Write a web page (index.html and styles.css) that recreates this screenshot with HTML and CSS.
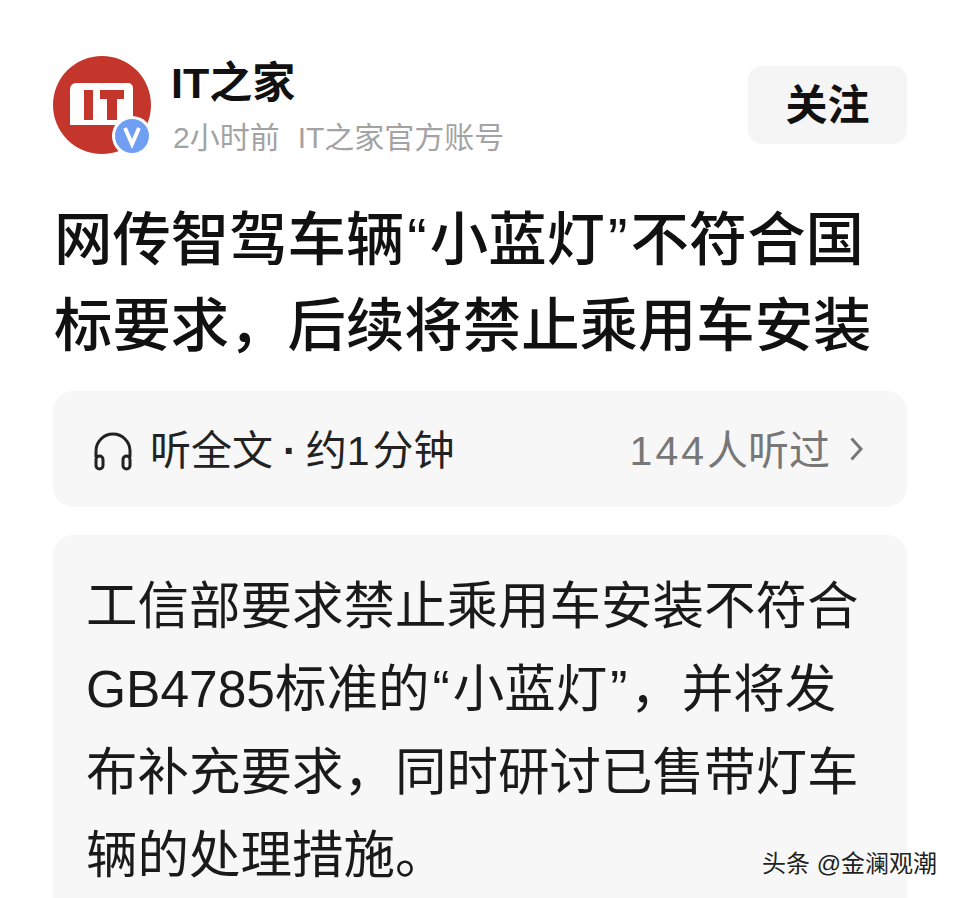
FILE: index.html
```html
<!DOCTYPE html>
<html lang="zh-CN">
<head>
    <meta charset="UTF-8">
    <title>网传智驾车辆“小蓝灯”不符合国标要求</title>
    <link rel="stylesheet" href="styles.css">
</head>
<body>
    <div class="page">
        <div class="author-row">
            <div class="avatar">
                <svg width="98" height="98" viewBox="0 0 98 98">
                    <circle cx="49" cy="49" r="49" fill="#c4362c"/>
                    <path d="M23 27h52a5 5 0 0 1 5 5v37H17V33a6 6 0 0 1 6-6z" fill="#fff"/>
                    <rect x="31" y="34" width="9" height="30" fill="#c4362c"/>
                    <rect x="47" y="34" width="24" height="9" fill="#c4362c"/>
                    <rect x="54" y="34" width="10" height="30" fill="#c4362c"/>
                    <circle cx="79" cy="80" r="20" fill="#fff"/>
                    <circle cx="79" cy="80" r="17" fill="#6f9ef2"/>
                    <path d="M72 72l7 16 7-16" fill="none" stroke="#fff" stroke-width="4"/>
                </svg>
            </div>
            <div class="author-info">
                <div class="author-name">IT之家</div>
                <div class="author-meta"><span>2小时前</span><span>IT之家官方账号</span></div>
            </div>
            <div class="follow-btn">关注</div>
        </div>

        <h1 class="title">
            <div class="line">网传智驾车辆<span class="quote">“</span>小蓝灯<span class="quote">”</span>不符合国</div>
            <div class="line">标要求，后续将禁止乘用车安装</div>
        </h1>

        <div class="listen-bar">
            <svg class="headphones" width="40" height="40" viewBox="0 0 40 40" fill="none" stroke="#222" stroke-width="3">
                <path d="M3 25V19a17 17 0 0 1 34 0v6"/>
                <rect x="3" y="24" width="7" height="13" rx="3.5"/>
                <rect x="30" y="24" width="7" height="13" rx="3.5"/>
            </svg>
            <div class="listen-text">听全文<span class="dot">·</span>约<span class="num">1</span>分钟</div>
            <div class="listen-count"><span class="num">144</span>人听过</div>
            <svg class="chevron" width="13" height="24" viewBox="0 0 13 24" fill="none" stroke="#777" stroke-width="3">
                <path d="M1.5 1.5L11 12 1.5 22.5"/>
            </svg>
        </div>

        <div class="summary">
            <div class="line">工信部要求禁止乘用车安装不符合</div>
            <div class="line">GB4785标准的<span class="quote">“</span>小蓝灯<span class="quote">”</span>，并将发</div>
            <div class="line">布补充要求，同时研讨已售带灯车</div>
            <div class="line">辆的处理措施。</div>
        </div>
    </div>
    <div class="watermark">头条 @金澜观潮</div>
</body>
</html>
```

FILE: styles.css
```css
html, body {
    margin: 0;
    padding: 0;
    height: 898px;
    overflow: hidden;
    background: #fff;
    font-family: "Liberation Sans", "Noto Sans CJK SC", sans-serif;
    color: #111;
}
.page {
    height: 842px;
    padding: 56px 53px 0;
    overflow: hidden;
}
.author-row {
    display: flex;
    align-items: flex-start;
}
.avatar {
    width: 98px;
    height: 98px;
    flex-shrink: 0;
}
.author-info {
    flex: 1;
    padding-left: 20px;
}
.author-name {
    font-size: 43px;
    line-height: 54px;
    font-weight: 700;
    color: #111;
}
.author-meta {
    display: flex;
    gap: 18px;
    margin: 8px 0 0 2px;
    font-size: 30px;
    line-height: 40px;
    color: #a3a3a3;
}
.follow-btn {
    width: 159px;
    height: 78px;
    margin-top: 10px;
    background: #f5f5f5;
    border-radius: 14px;
    font-size: 42px;
    font-weight: 700;
    line-height: 80px;
    text-align: center;
}
.title {
    margin: 39px 0 0 1px;
    font-size: 58.4px;
    line-height: 86px;
    font-weight: 500;
    color: #111;
}
.line {
    white-space: nowrap;
}
.quote {
    padding: 0 3px;
}
.listen-bar {
    display: flex;
    align-items: center;
    box-sizing: border-box;
    height: 116px;
    margin-top: 22px;
    padding: 0 44px 4px 40px;
    background: #f7f7f7;
    border-radius: 20px;
}
.headphones {
    margin-right: 17px;
    margin-top: 10px;
    flex-shrink: 0;
}
.listen-text {
    flex: 1;
    font-size: 41px;
    color: #222;
}
.dot {
    margin: 0 9px 0 10px;
    font-weight: 700;
}
.listen-count {
    font-size: 41px;
    color: #777;
}
.num {
    letter-spacing: 3px;
}
.chevron {
    margin-left: 20px;
    margin-top: 4px;
}
.summary {
    box-sizing: border-box;
    margin-top: 28px;
    padding: 30px 33px 0;
    height: 363px;
    background: #f7f7f7;
    border-radius: 20px 20px 0 0;
    font-size: 51.5px;
    line-height: 83px;
    color: #1a1a1a;
}
.summary .quote {
    padding: 0 3px;
}
.watermark {
    position: absolute;
    left: 762px;
    top: 849px;
    font-size: 24px;
    line-height: 30px;
    color: #222;
    text-shadow: 1px 1px 0 #fff;
}
```
